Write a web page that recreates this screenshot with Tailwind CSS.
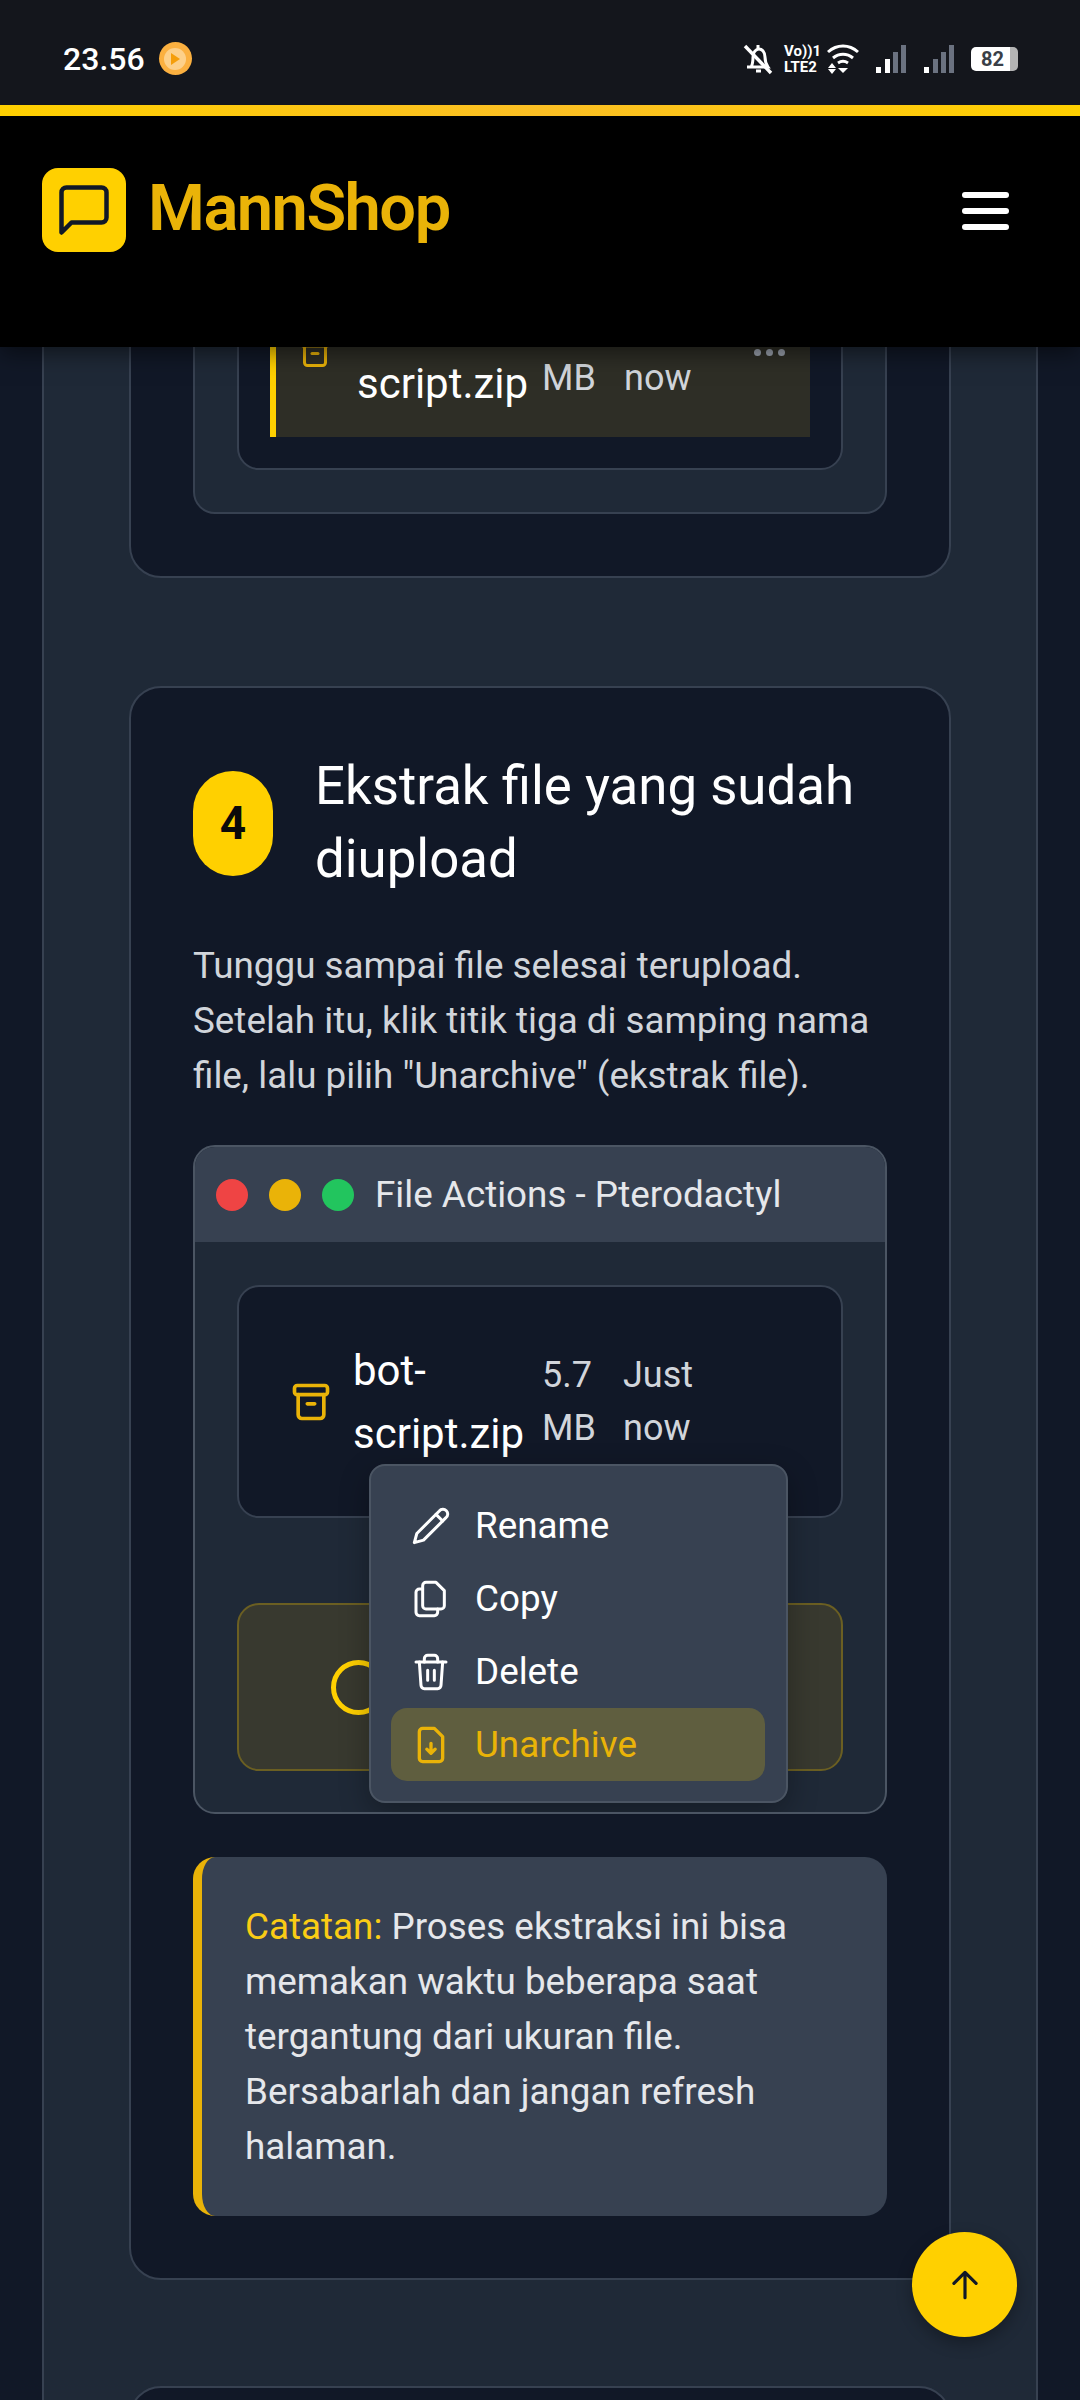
<!DOCTYPE html>
<html lang="id">
<head>
    <meta charset="UTF-8">
    <meta name="viewport" content="width=device-width, initial-scale=1.0">
    <title>MannShop</title>
    <script src="https://cdn.jsdelivr.net/npm/@tailwindcss/browser@4"></script>
</head>
<body class="bg-[#111827] h-[2400px] w-[1080px] overflow-hidden flex flex-col font-['Roboto',sans-serif] text-[#d1d5db]">

<!-- status bar -->
<div class="h-[105px] shrink-0 bg-[#14161c] flex items-center justify-between pl-[63px] pr-[62px] pt-[12px] relative z-20">
    <div class="flex items-center gap-[14px] text-white text-[32px] font-medium">
        <span>23.56</span>
        <span class="w-[33px] h-[33px] rounded-full bg-[#fbb040] flex items-center justify-center">
            <span class="w-[22px] h-[22px] rounded-full bg-[#fdd08a] flex items-center justify-center">
                <svg width="10" height="12" viewBox="0 0 10 12"><path d="M1 0l9 6-9 6z" fill="#f59e0b"/></svg>
            </span>
        </span>
    </div>
    <div class="flex items-center text-white">
        <svg class="mr-[11px]" width="30" height="32" viewBox="0 0 30 32" fill="none" stroke="#fff" stroke-width="3"><path d="M8 24c2-3 2-6 2-10 0-5 3-8 6-8s6 3 6 8c0 4 1 7 3 10H4"/><path d="M13 28h5M15 2v3"/><path d="M2 3l26 27" stroke-width="3.4"/></svg>
        <div class="w-[35px] mr-[8px] flex flex-col text-[15px] leading-[16px] font-bold">
            <span>Vo))1</span><span>LTE2</span>
        </div>
        <svg class="mr-[17px]" width="32" height="30" viewBox="0 0 32 30" fill="none" stroke="#fff" stroke-width="3"><path d="M1 8c9-8 21-8 30 0"/><path d="M6 14c6-5 14-5 20 0"/><path d="M11 19c3-2 7-2 10 0"/><path d="M1 24h8l-4-5zM1 25h8l-4 5z" fill="#fff" stroke="none"/><path d="M11 24h10l-5 5z" fill="#fff" stroke="none"/></svg>
        <svg class="mr-[18px]" width="30" height="28" viewBox="0 0 30 28"><rect x="0" y="22" width="5" height="6" fill="#fff"/><rect x="9" y="14" width="5" height="14" fill="#fff"/><rect x="17" y="7" width="5" height="21" fill="#6b7280"/><rect x="25" y="0" width="5" height="28" fill="#6b7280"/></svg>
        <svg class="mr-[17px]" width="30" height="28" viewBox="0 0 30 28"><rect x="0" y="22" width="5" height="6" fill="#fff"/><rect x="9" y="14" width="5" height="14" fill="#6b7280"/><rect x="17" y="7" width="5" height="21" fill="#6b7280"/><rect x="25" y="0" width="5" height="28" fill="#6b7280"/></svg>
        <div class="w-[47px] h-[24px] rounded-[5px] bg-[linear-gradient(90deg,#fff_83%,#b4b4b4_83%)] text-[#3a3f47] text-[20px] leading-[24px] font-bold pl-[10px]">82</div>
    </div>
</div>

<!-- yellow line -->
<div class="h-[11px] shrink-0 bg-[linear-gradient(90deg,#ffd000,#fbbf24,#ffd000)] relative z-20"></div>

<!-- header -->
<header class="h-[231px] shrink-0 bg-black relative z-10 shadow-[0_6px_22px_rgba(0,0,0,0.5)] pl-[42px] pr-[71px] pt-[52px] flex items-start justify-between">
    <div class="flex items-center gap-[22px]">
        <div class="w-[84px] h-[84px] rounded-[16px] bg-[#ffd000] flex items-center justify-center">
            <svg width="60" height="60" viewBox="0 0 24 24" fill="none" stroke="#111827" stroke-width="1.8" stroke-linecap="round" stroke-linejoin="round"><path d="M21 15a2 2 0 0 1-2 2H7l-4 4V5a2 2 0 0 1 2-2h14a2 2 0 0 1 2 2z"/></svg>
        </div>
        <span class="text-[65px] leading-[84px] -mt-[4px] font-semibold text-[#eab308] tracking-[-1.5px]">MannShop</span>
    </div>
    <div class="w-[47px] mt-[24px] flex flex-col gap-[10px]">
        <span class="h-[6px] rounded-full bg-white"></span>
        <span class="h-[6px] rounded-full bg-white"></span>
        <span class="h-[6px] rounded-full bg-white"></span>
    </div>
</header>

<main class="flex-1 overflow-hidden relative">
    <!-- page column, already scrolled so the top of it is behind the header -->
    <div class="ml-[42px] w-[996px] -mt-[182px] bg-[#1f2937] border-x-2 border-[#374151] px-[85px]">

        <!-- step 3, bottom only -->
        <section class="bg-[#111827] border-2 border-[#374151] rounded-[32px] px-[62px] pt-[0px] pb-[62px]">
            <div class="bg-[#1f2937] border-2 border-[#374151] rounded-[22px] px-[42px] pt-[65px] pb-[42px]">
                <div class="bg-[#111827] border-2 border-[#374151] rounded-[22px] p-[31px]">
                    <div class="flex items-center h-[170px] bg-[#2e2e26] border-l-[6px] border-[#ffd000] pl-[21px] pr-[25px]">
                        <svg class="shrink-0 mr-[24px]" width="36" height="36" viewBox="0 0 24 24" fill="none" stroke="#eab308" stroke-width="2" stroke-linecap="round" stroke-linejoin="round"><rect x="3" y="3" width="18" height="5" rx="1.5"/><path d="M5 8v11a2 2 0 0 0 2 2h10a2 2 0 0 0 2-2V8"/><path d="M10 13h4"/></svg>
                        <div class="w-[185px] text-white text-[42px] leading-[63px]">bot-<br>script.zip</div>
                        <div class="w-[82px] text-[36px] leading-[53px]">5.7<br>MB</div>
                        <div class="flex-1 text-[36px] leading-[53px]">Just<br>now</div>
                        <div class="flex gap-[5px] self-center">
                            <span class="w-[7px] h-[7px] rounded-full bg-[#9ca3af]"></span>
                            <span class="w-[7px] h-[7px] rounded-full bg-[#9ca3af]"></span>
                            <span class="w-[7px] h-[7px] rounded-full bg-[#9ca3af]"></span>
                        </div>
                    </div>
                </div>
            </div>
        </section>

        <!-- step 4 -->
        <section class="mt-[108px] bg-[#111827] border-2 border-[#374151] rounded-[32px] px-[62px] pt-[62px] pb-[62px]">
            <div class="flex items-center gap-[42px]">
                <div class="w-[80px] h-[105px] shrink-0 rounded-full bg-[#ffd000] text-[#0a0a0a] text-[46px] font-bold flex items-center justify-center">4</div>
                <h2 class="text-white text-[52.8px] leading-[73px] font-normal">Ekstrak file yang sudah diupload</h2>
            </div>
            <p class="mt-[42px] text-[36.8px] leading-[55px]">Tunggu sampai file selesai terupload. Setelah itu, klik titik tiga di samping nama file, lalu pilih "Unarchive" (ekstrak file).</p>

            <!-- mockup window -->
            <div class="mt-[42px] bg-[#1f2937] border-2 border-[#4b5563] rounded-[22px] overflow-hidden relative">
                <div class="h-[95px] bg-[#374151] flex items-center pl-[21px] gap-[21px]">
                    <span class="w-[32px] h-[32px] rounded-full bg-[#ef4444]"></span>
                    <span class="w-[32px] h-[32px] rounded-full bg-[#eab308]"></span>
                    <span class="w-[32px] h-[32px] rounded-full bg-[#22c55e]"></span>
                    <span class="text-[36.8px] text-[#e5e7eb]">File Actions - Pterodactyl</span>
                </div>
                <div class="px-[42px] pt-[43px] pb-[41px]">
                    <div class="h-[233px] bg-[#111827] border-2 border-[#374151] rounded-[22px] flex items-center pl-[50px]">
                        <svg class="shrink-0 mr-[20px]" width="44" height="44" viewBox="0 0 24 24" fill="none" stroke="#eab308" stroke-width="2" stroke-linecap="round" stroke-linejoin="round"><rect x="3" y="3" width="18" height="5" rx="1.5"/><path d="M5 8v11a2 2 0 0 0 2 2h10a2 2 0 0 0 2-2V8"/><path d="M10 13h4"/></svg>
                        <div class="w-[189px] text-white text-[42px] leading-[63px]">bot-<br>script.zip</div>
                        <div class="w-[81px] text-[36px] leading-[53px]">5.7<br>MB</div>
                        <div class="text-[36px] leading-[53px]">Just<br>now</div>
                    </div>
                    <div class="mt-[85px] h-[168px] bg-[#38392f] border-2 border-[#6b5f22] rounded-[22px] flex items-center pl-[92px]">
                        <span class="w-[55px] h-[55px] rounded-full border-[5px] border-[#ffd000]"></span>
                    </div>
                </div>

                <!-- context menu -->
                <div class="absolute left-[174px] top-[317px] w-[419px] bg-[#374151] border-2 border-[#4b5563] rounded-[16px] shadow-[0_10px_30px_rgba(0,0,0,0.3)] pl-[20px] pr-[21px] pt-[23px] pb-[20px] text-[36.8px] text-white">
                    <div class="h-[73px] flex items-center pl-[20px] gap-[24px]">
                        <svg width="40" height="40" viewBox="0 0 24 24" fill="none" stroke="#fff" stroke-width="1.8" stroke-linecap="round" stroke-linejoin="round"><path d="M17 3a2.85 2.83 0 1 1 4 4L7.5 20.5 2 22l1.5-5.5Z"/><path d="M15 5l4 4"/></svg>
                        <span>Rename</span>
                    </div>
                    <div class="h-[73px] flex items-center pl-[20px] gap-[24px]">
                        <svg width="40" height="40" viewBox="0 0 24 24" fill="none" stroke="#fff" stroke-width="1.8" stroke-linecap="round" stroke-linejoin="round"><path d="M9 2h6l5 5v9a2 2 0 0 1-2 2H9a2 2 0 0 1-2-2V4a2 2 0 0 1 2-2z"/><path d="M7 6H5a2 2 0 0 0-2 2v12a2 2 0 0 0 2 2h9a2 2 0 0 0 2-2v-2"/></svg>
                        <span>Copy</span>
                    </div>
                    <div class="h-[73px] flex items-center pl-[20px] gap-[24px]">
                        <svg width="40" height="40" viewBox="0 0 24 24" fill="none" stroke="#fff" stroke-width="1.8" stroke-linecap="round" stroke-linejoin="round"><path d="M3 6h18"/><path d="M19 6l-1 14a2 2 0 0 1-2 2H8a2 2 0 0 1-2-2L5 6"/><path d="M8 6V4a2 2 0 0 1 2-2h4a2 2 0 0 1 2 2v2"/><path d="M10 11v6M14 11v6"/></svg>
                        <span>Delete</span>
                    </div>
                    <div class="h-[73px] flex items-center pl-[20px] gap-[24px] rounded-[16px] bg-[#5f5e3f] text-[#eab308]">
                        <svg width="40" height="40" viewBox="0 0 24 24" fill="none" stroke="#eab308" stroke-width="2" stroke-linecap="round" stroke-linejoin="round"><path d="M14 2H7a2 2 0 0 0-2 2v16a2 2 0 0 0 2 2h10a2 2 0 0 0 2-2V7z"/><path d="M12 11v6M9.5 14.5 12 17l2.5-2.5"/></svg>
                        <span>Unarchive</span>
                    </div>
                </div>
            </div>

            <!-- note -->
            <div class="mt-[43px] h-[359px] bg-[#374151] border-l-[9px] border-[#eab308] rounded-[22px] pl-[43px] pr-[44px] pt-[42px] text-[36.8px] leading-[55px] text-[#e5e7eb]">
                <span class="text-[#facc15]">Catatan:</span> Proses ekstraksi ini bisa memakan waktu beberapa saat tergantung dari ukuran file. Bersabarlah dan jangan refresh halaman.
            </div>
        </section>

        <!-- step 5, just the top edge -->
        <section class="mt-[106px] h-[200px] bg-[#111827] border-2 border-[#374151] rounded-[32px]"></section>
    </div>

    <!-- back to top -->
    <div class="absolute left-[912px] top-[1885px] w-[105px] h-[105px] rounded-full bg-[#ffd000] shadow-[0_6px_16px_rgba(0,0,0,0.3)] flex items-center justify-center">
        <svg width="38" height="38" viewBox="0 0 24 24" fill="none" stroke="#111827" stroke-width="2" stroke-linecap="round" stroke-linejoin="round"><path d="M12 20V4M5 11l7-7 7 7"/></svg>
    </div>
</main>
</body>
</html>
